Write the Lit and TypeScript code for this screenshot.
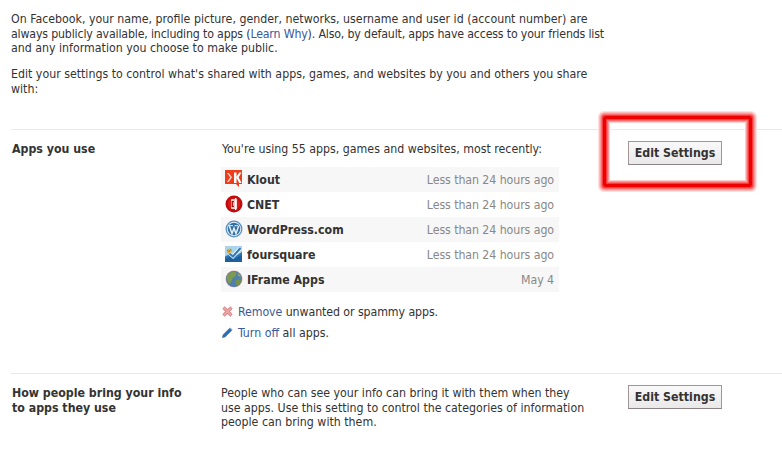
import { LitElement, html, css, svg } from "lit";
import { customElement } from "lit/decorators.js";

const icons: Record<string, unknown> = {
  klout: svg`<path d="M0 0h17v14h-3v3l-3-3H0z" fill="#ee3d1c"/><path d="M9 2.500h2.500v4.300L14.300 2.500h2.300l-3 4.700 3 5.800h-2.400l-2.700-5v5H9z" fill="#fff"/><path d="M2 3l3.200 4.300L2 12h1.800l3.200-4.700L3.800 3z" fill="#fbd0c4"/>`,
  cnet: svg`<circle cx="9" cy="9" r="8.500" fill="#c20c0c"/><circle cx="9" cy="9" r="6" fill="#dd1a1a"/><rect x="6" y="4" width="6" height="10" rx="1" fill="#f3c9c9"/><path d="M9 6.700H7.300v4.600H9" fill="none" stroke="#a11" stroke-width="1.300"/><rect x="10" y="3" width="1.400" height="12" fill="#fff"/>`,
  wp: svg`<circle cx="9" cy="9" r="8.500" fill="#5b93c4"/><circle cx="9" cy="9" r="7.200" fill="#e6eff6"/><circle cx="9" cy="9" r="6.200" fill="#2f6ea6"/><path d="M4.300 6l2.700 7.500 2-5.300 2 5.300L13.700 6" fill="none" stroke="#e6eff6" stroke-width="1.500"/><path d="M3.500 5.700h4.500M9.500 5.700h3.500" stroke="#e6eff6" stroke-width="1"/>`,
  fs: svg`<rect x="0" y="1" width="17" height="16" fill="#a9d3ef"/><path d="M0 11.500l5-2.500 4 3 8-5v10H0z" fill="#2a76b4"/><path d="M0 14l5-2 4 2 8-4v7H0z" fill="#1e5f9c"/><circle cx="4.500" cy="6" r="2.600" fill="#e5b033"/><path d="M2 5l2 2 2-3" fill="none" stroke="#7f9a3a" stroke-width="1"/><path d="M4.500 8.500l3.500 3L15.500 3" fill="none" stroke="#fff" stroke-width="3.600"/><path d="M4.500 8.500l3.500 3L15.500 3" fill="none" stroke="#2f7dbc" stroke-width="2.200"/>`,
  iframe: svg`<circle cx="9" cy="9" r="8.500" fill="#e9a9a0"/><circle cx="9" cy="9" r="8" fill="#4f7fae"/><path d="M2 6c2-4 6-5 9-4 1 2 0 4-2 5s-2 3-3 5-2 2-3 0-2-4-1-6z" fill="#7d9a4f"/><path d="M11 10c2-1 4.500-1 5.500 0-.5 3-2 5-4 6-1.500-1-2.500-5-1.500-6z" fill="#75914a"/><path d="M13 3c1.500 1 2.500 2.500 3 4l-3-1z" fill="#8fa763"/>`,
};

const apps = [
  { key: "klout", name: "Klout", when: "Less than 24 hours ago" },
  { key: "cnet", name: "CNET", when: "Less than 24 hours ago" },
  { key: "wp", name: "WordPress.com", when: "Less than 24 hours ago" },
  { key: "fs", name: "foursquare", when: "Less than 24 hours ago" },
  { key: "iframe", name: "IFrame Apps", when: "May 4" },
];

@customElement("app-root")
export class AppRoot extends LitElement {
  static styles = css`
    :host {
      display: block;
      position: relative;
      width: 782px;
      height: 456px;
      overflow: hidden;
      background: #fff;
      font-family: "DejaVu Sans", Tahoma, sans-serif;
      font-stretch: condensed;
      font-size: 12.27px;
      line-height: 14.500px;
      color: #333;
    }
    a { color: #3b5998; text-decoration: none; }
    p { margin: 0; }
    .intro { padding: 12px 0 0 11px; width: 640px; height: 129px; box-sizing: border-box; }
    .intro p + p { margin-top: 11.500px; }
    .tight { letter-spacing: -0.17px; }
    .section {
      margin-left: 11px;
      border-top: 1px solid #e9e9e9;
      display: grid;
      grid-template-columns: 210px 407px 94px;
      box-sizing: border-box;
    }
    .apps { height: 244px; padding-top: 11px; }
    .people { padding-top: 11px; }
    .label { font-weight: bold; color: #333; padding: 1px 0 0 1px; }
    .lead { margin-bottom: 11px; padding: 0 0 0 1px; position: relative; top: 1px; }
    .desc { width: 370px; padding-top: 1px; }
    .list { width: 338px; }
    .row {
      height: 25px;
      display: flex;
      align-items: center;
      padding: 2px 5px 0 4px;
      gap: 4px;
      box-sizing: border-box;
    }
    .row svg { width: 18px; height: 18px; flex: none; position: relative; top: -1px; }
    .row:nth-child(odd) { background: #f7f7f7; }
    .name { font-weight: bold; color: #333; flex: 1; }
    .when { color: #888; letter-spacing: -0.08px; }
    .actions { margin-top: 12px; padding-left: 1px; display: flex; flex-direction: column; gap: 6.500px; }
    .action { display: flex; align-items: center; gap: 5px; padding-top: 1px; }
    .action + .action { padding-top: 0; }
    .action svg { width: 11px; height: 11px; flex: none; }
    .squeeze { letter-spacing: -0.08px; }
    .btn {
      box-sizing: border-box;
      width: 94px;
      height: 24px;
      border: 1px solid #a09698;
      border-bottom-color: #8d8385;
      background: linear-gradient(#f9f9f9, #e9e9e9);
      font-family: inherit;
      font-stretch: condensed;
      font-weight: bold;
      font-size: 12.27px;
      color: #333;
      padding: 0;
      white-space: nowrap;
    }
    .mark {
      position: absolute;
      left: 603px;
      top: 116px;
      width: 149px;
      height: 71px;
      box-sizing: border-box;
      border: 3px solid #ee0000;
      border-radius: 2px;
      box-shadow:
        0 0 0 1px #f63c3c,
        0 0 0 2px #f96e6e,
        0 0 0 3px #fb9a9a,
        0 0 0 4px #fdbcbc,
        0 0 0 5px #fee0e0,
        inset 0 0 0 1px #f63c3c,
        inset 0 0 0 2px #f96e6e,
        inset 0 0 0 3px #fb9a9a,
        inset 0 0 0 4px #fdd0d0;
    }
  `;

  render() {
    return html`
      <div class="intro">
        <p>On Facebook, your name, profile picture, gender, networks, username and user id (account number) are<br /><span class="tight">always publicly available, including to apps (<a>Learn Why</a>). Also, by default, apps have access to your friends list</span><br />and any information you choose to make public.</p>
        <p>Edit your settings to control what's shared with apps, games, and websites by you and others you share<br />with:</p>
      </div>
      <div class="section apps">
        <div class="label">Apps you use</div>
        <div>
          <div class="lead">You're using 55 apps, games and websites, most recently:</div>
          <div class="list">
            ${apps.map(
              (a) => html`<div class="row">
                <svg viewBox="0 0 18 18">${icons[a.key]}</svg>
                <span class="name">${a.name}</span>
                <span class="when">${a.when}</span>
              </div>`
            )}
          </div>
          <div class="actions">
            <div class="action">
              <svg viewBox="0 0 11 11"><path d="M1.500 1.500l8 8M9.500 1.500l-8 8" stroke="#d98080" stroke-width="3.200" fill="none"/><path d="M1.500 1.500l8 8M9.500 1.500l-8 8" stroke="#f0a8a8" stroke-width="1.600" fill="none"/></svg>
              <span class="squeeze"><a>Remove</a> unwanted or spammy apps.</span>
            </div>
            <div class="action">
              <svg viewBox="0 0 11 11"><path d="M0 11l.8-3.200L7.600 1l2.400 2.400-6.800 6.800z" fill="#2f6cb5"/><path d="M8.200.4l2.400 2.400-.6.6L7.600 1z" fill="#6f9bd0"/></svg>
              <span><a>Turn off</a> all apps.</span>
            </div>
          </div>
        </div>
        <div><button class="btn">Edit Settings</button></div>
      </div>
      <div class="section people">
        <div class="label">How people bring your info<br />to apps they use</div>
        <div class="desc">People who can see your info can bring it with them when they use apps. Use this setting to control the categories of information people can bring with them.</div>
        <div><button class="btn">Edit Settings</button></div>
      </div>
      <div class="mark"></div>
    `;
  }
}
